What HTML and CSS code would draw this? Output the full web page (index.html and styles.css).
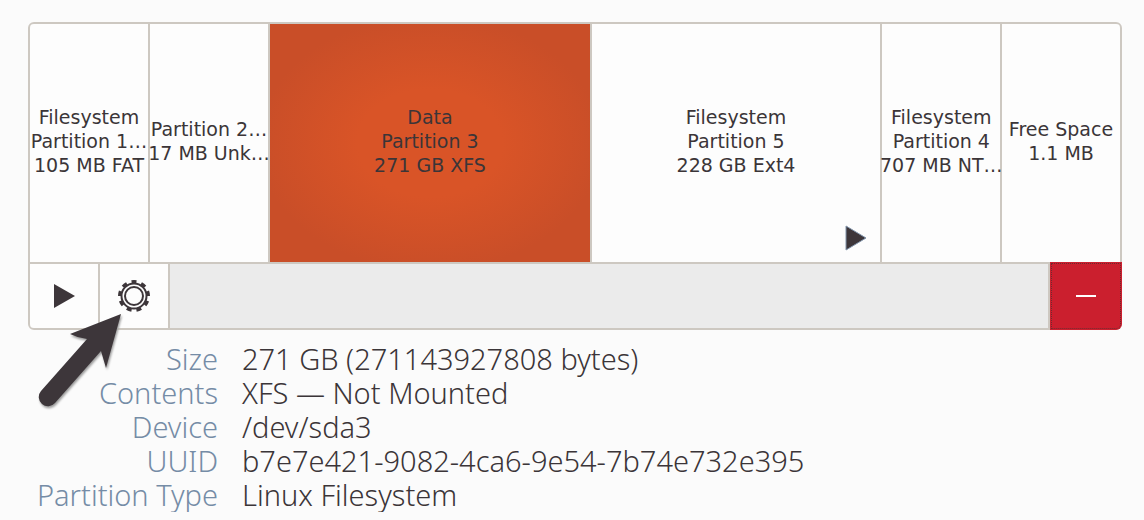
FILE: index.html
```html
<!DOCTYPE html>
<html lang="en">
<head>
<meta charset="utf-8">
<title>Disks</title>
<link rel="stylesheet" href="styles.css">
</head>
<body>
<main class="page">
  <section class="volumes" aria-label="Volumes">
    <div class="partitions">
      <div class="partition small"><p class="label">Filesystem<br>Partition 1…<br>105 MB FAT</p></div>
      <div class="partition small"><p class="label">Partition 2…<br>17 MB Unk…</p></div>
      <div class="partition large selected"><p class="label">Data<br>Partition 3<br>271 GB XFS</p></div>
      <div class="partition medium"><p class="label">Filesystem<br>Partition 5<br>228 GB Ext4</p>
        <svg class="mounted" width="22" height="26" viewBox="0 0 22 26" aria-hidden="true"><path d="M1 1 21 13 1 25Z"/></svg>
      </div>
      <div class="partition small"><p class="label">Filesystem<br>Partition 4<br>707 MB NT…</p></div>
      <div class="partition small"><p class="label">Free Space<br>1.1 MB</p></div>
    </div>
    <div class="toolbar">
      <button class="tool" type="button" aria-label="Mount">
        <svg width="22" height="24" viewBox="0 0 22 24"><path d="M1 0 22 12 1 24Z"/></svg>
      </button>
      <button class="tool" type="button" aria-label="Options">
        <svg width="34" height="34" viewBox="-17 -17 34 34">
          <circle class="teeth" r="14" pathLength="90"/>
          <circle class="rim" r="12.5"/>
          <circle class="hub" r="9"/>
        </svg>
      </button>
      <span class="spacer"></span>
      <button class="delete" type="button" aria-label="Delete">
        <svg width="20" height="2" viewBox="0 0 20 2"><path d="M0 0H20V2H0Z"/></svg>
      </button>
    </div>
    <svg class="pointer" width="94" height="104" viewBox="0 0 94 104" aria-hidden="true">
      <path d="M87 6 36 26Q44 30 53 31L7 83A9 9 0 0 0 21 95L67 43 72 60Z"/>
    </svg>
  </section>
  <dl class="details">
    <dt>Size</dt><dd>271 GB (271143927808 bytes)</dd>
    <dt>Contents</dt><dd>XFS — Not Mounted</dd>
    <dt>Device</dt><dd>/dev/sda3</dd>
    <dt>UUID</dt><dd>b7e7e421-9082-4ca6-9e54-7b74e732e395</dd>
    <dt>Partition Type</dt><dd>Linux Filesystem</dd>
  </dl>
</main>
</body>
</html>
```
FILE: styles.css
```css
* { box-sizing: border-box; }
body {
  margin: 0;
  background: #fbfbfb;
  color: #3b3538;
}
.page { padding: 22px 22px 0 28px; }
.volumes {
  position: relative;
  border: 2px solid #cdc8c1;
  border-radius: 6px;
  font: 19px/24px "DejaVu Sans", sans-serif;
}
.partitions {
  display: flex;
  gap: 2px;
  background: #cdc8c1;
  border-radius: 4px 4px 0 0;
}
.partition {
  position: relative;
  display: grid;
  align-content: center;
  min-width: 0;
  min-height: 238px;
  padding-bottom: 4px;
  background: #fdfdfd;
  text-align: center;
  white-space: nowrap;
}
.partition:first-child { border-radius: 4px 0 0 0; }
.partition:last-of-type { border-radius: 0 4px 0 0; }
.label { margin: 0 -2px; }
.small { flex: 118 1 0; }
.medium { flex: 288 1 0; }
.large { flex: 320 1 0; }
.selected { background: radial-gradient(ellipse farthest-corner, #d95427 32%, #c94e28 76%); }
.mounted {
  position: absolute;
  right: 13px;
  bottom: 11px;
  fill: #3d363a;
  stroke: #8194ab;
}
.toolbar {
  display: flex;
  gap: 2px;
  height: 66px;
  border-top: 2px solid #cdc8c1;
  background: #cdc8c1;
  border-radius: 0 0 4px 4px;
}
button {
  display: flex;
  align-items: center;
  justify-content: center;
  margin: 0;
  padding: 0;
  border: 0;
}
.tool {
  width: 68px;
  background: #fdfdfd;
  fill: #3d363a;
}
.tool:first-child { border-radius: 0 0 0 4px; }
.teeth {
  fill: none;
  stroke: #3d363a;
  stroke-width: 4;
  stroke-dasharray: 5 5;
  stroke-dashoffset: 2.5;
  transform: rotate(-90deg);
}
.rim, .hub {
  fill: #fdfdfd;
  stroke: #3d363a;
  stroke-width: 2;
}
.spacer { flex: 1; background: #ebebeb; }
.delete {
  width: 72px;
  margin: -2px -2px -2px 0;
  border-radius: 0 0 6px 0;
  background: #cb1f2e;
  fill: #fff;
  outline: 1px dotted #6e2a30;
  outline-offset: -2px;
}
.pointer {
  position: absolute;
  left: 4px;
  top: 284px;
  fill: #3d363a;
  filter: drop-shadow(1px 2px 1px #9a9a9a);
}
.details {
  display: grid;
  grid-template-columns: minmax(190px, max-content) 1fr;
  column-gap: 24px;
  margin: 12px 0 0;
  font: 300 29px/34px "Noto Sans", "Open Sans", sans-serif;
}
dt { color: #758ca6; text-align: right; white-space: nowrap; }
dd { margin: 0; }
```
